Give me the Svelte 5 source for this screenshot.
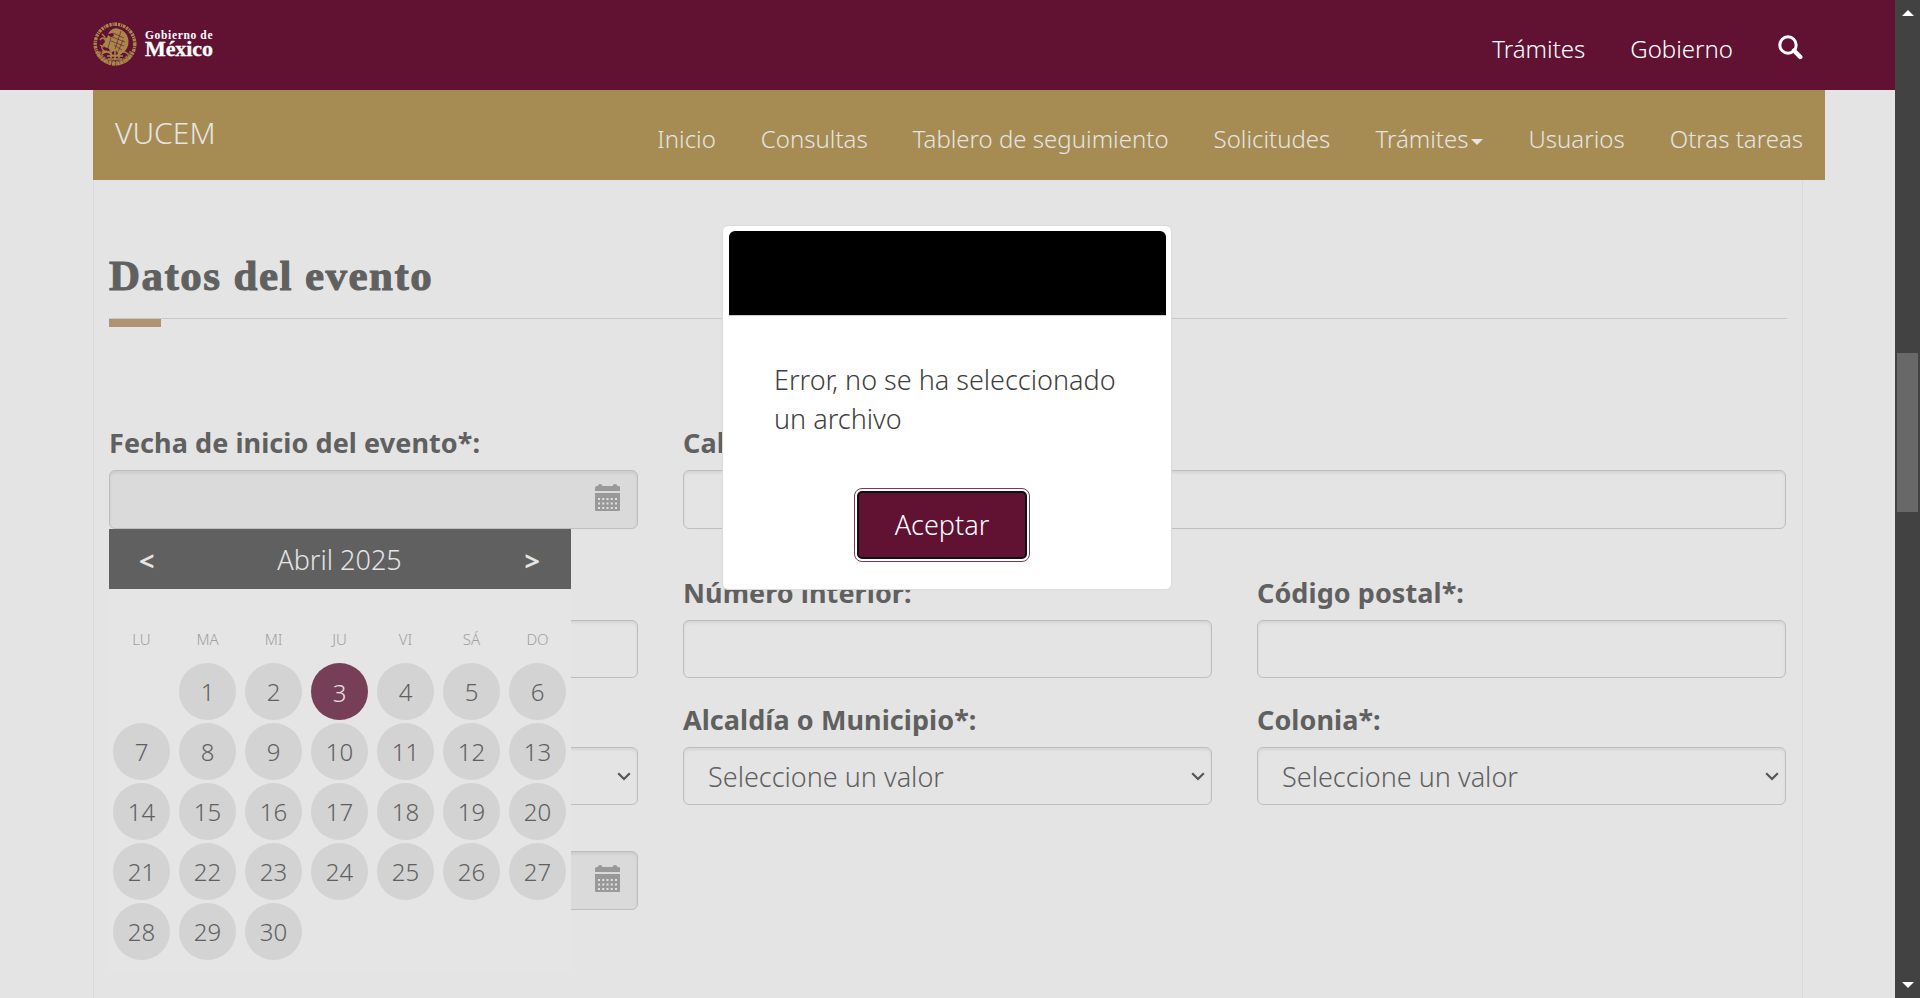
<script>
  const nav = ['Inicio', 'Consultas', 'Tablero de seguimiento', 'Solicitudes', 'Trámites', 'Usuarios', 'Otras tareas'];
  const weekdays = ['LU', 'MA', 'MI', 'JU', 'VI', 'SÁ', 'DO'];
  const days = [null, ...Array.from({ length: 30 }, (_, i) => i + 1)];
  const today = 3;
  const dots = [0, 1, 2].flatMap((r) => [0, 1, 2, 3, 4].map((c) => [3 + c * 4.25, 14 + r * 4.5]));
</script>

{#snippet calendarIcon()}
  <svg class="cal-icon" viewBox="0 0 25 28" width="25" height="28">
    <path fill="#999" d="M0 7V4q0-2 2-2h1q0-2 2-2t2.500 2h10q.5-2 2.500-2t2.500 2h.5q2.500 0 2.500 2v3zM0 9h25v17q0 1-1 1H1q-1 0-1-1z" />
    {#each dots as [x, y]}
      <rect {x} {y} width="2" height="2" fill="#e0e0e0" />
    {/each}
  </svg>
{/snippet}

{#snippet select(text)}
  <div class="field select">
    <span>{text}</span>
    <svg viewBox="0 0 14 9" width="14" height="9"><path d="M1.200 1.200 7 7l5.800-5.800" fill="none" stroke="#555" stroke-width="2.200" /></svg>
  </div>
{/snippet}

<div class="window">
  <div class="page">
    <header>
      <div class="brand">
        <svg viewBox="0 0 44 44" width="44" height="44" fill="none" stroke="#a9864a">
          <circle cx="22" cy="22" r="19.800" stroke-width="3.400" stroke-dasharray="2.300 .8 1.200 .7 2.800 .9" />
          <path stroke-width="5" stroke-dasharray="3 .7" d="M5 30q6 11 17 11t17-11" opacity=".75" />
          <path fill="#a9864a" stroke="none" d="M17 9q4-4 9-2 7 2 9 9 2 7-3 13l-5 4q-3-1-4-5l-4 2-4-4q-4 0-5-4l3-3-2-4 3 1 1-3 3 2 3-1-1-3-5 1z" />
          <path stroke="#611232" stroke-width=".8" d="m20 11 11 5m-12-1 13 5m-14-1 13 5m-10-1 8 5m-1-19-6 18m-3-15-4 14m15-8-6 14" opacity=".75" />
          <path stroke-width="1.300" d="M7 18q3-4 5 0t-1 5q-4 2-1 5t7 1m-8 3q5-4 9 0t9-1q4-3 8 1M14 34h16m-15 3h14M9 12l3 3m-5 8 4 2m-2 5 5-1" />
          <path stroke-width="1.600" d="M18 28v8m4-8v10m4-9v7" />
        </svg>
        <div class="wordmark"><span class="gob">Gobierno de</span><span class="mex">México</span></div>
      </div>
      <nav>
        <span>Trámites</span><span>Gobierno</span>
        <svg viewBox="0 0 26 25" width="26" height="25" fill="none" stroke="#fff">
          <circle cx="10" cy="10" r="8.200" stroke-width="3" /><path d="m16 15.500 6.300 6.500" stroke-width="4.400" stroke-linecap="round" />
        </svg>
      </nav>
    </header>

    <div class="subnav">
      <span class="title">VUCEM</span>
      <nav>
        {#each nav as item}
          <span>{item}{#if item === 'Trámites'}<i class="caret"></i>{/if}</span>
        {/each}
      </nav>
    </div>

    <main>
      <h2>Datos del evento</h2>
      <div class="rule"><i></i></div>

      <div class="grid first">
        <div class="cell has-calendar">
          <b class="label">Fecha de inicio del evento*:</b>
          <div class="field date">{@render calendarIcon()}</div>
          <div class="calendar">
            <div class="cal-head"><b>&lt;</b><span>Abril 2025</span><b>&gt;</b></div>
            <div class="cal-grid names">
              {#each weekdays as d}<span>{d}</span>{/each}
            </div>
            <div class="cal-grid">
              {#each days as d}
                <span class="slot">{#if d}<span class="day" class:today={d === today}>{d}</span>{/if}</span>
              {/each}
            </div>
          </div>
        </div>
        <div class="cell wide"><b class="label">Calle*:</b><div class="field tall"></div></div>
      </div>

      <div class="grid second">
        <div class="cell"><b class="label"></b><div class="field"></div></div>
        <div class="cell"><b class="label">Número interior:</b><div class="field"></div></div>
        <div class="cell"><b class="label">Código postal*:</b><div class="field"></div></div>
      </div>

      <div class="grid third">
        <div class="cell"><b class="label"></b>{@render select('')}</div>
        <div class="cell"><b class="label">Alcaldía o Municipio*:</b>{@render select('Seleccione un valor')}</div>
        <div class="cell"><b class="label">Colonia*:</b>{@render select('Seleccione un valor')}</div>
      </div>

      <div class="grid">
        <div class="cell"><div class="field date">{@render calendarIcon()}</div></div>
      </div>
    </main>
  </div>

  <div class="scrollbar">
    <i class="up"></i>
    <div class="thumb"></div>
    <i class="down"></i>
  </div>

  <div class="modal">
    <div class="modal-head"></div>
    <p>Error, no se ha seleccionado<br />un archivo</p>
    <button>Aceptar</button>
  </div>
</div>

<style>
  :global(body) { margin: 0; background: #e4e4e4; overflow: hidden; }
  * { box-sizing: border-box; }
  .window {
    position: relative; display: flex; width: 1920px; height: 998px; overflow: hidden;
    background: #e4e4e4; color: #606060; font: 300 27px/39px "Noto Sans", sans-serif;
  }
  svg { display: block; flex: none; }
  .page { width: 1895px; height: 998px; display: flex; flex-direction: column; }

  header { height: 90px; flex: none; background: #611232; display: flex; justify-content: space-between; padding: 0 91px 0 93px; }
  .brand { display: flex; padding-top: 22px; gap: 8px; }
  .wordmark { display: flex; flex-direction: column; color: #fff; padding-top: 7px; white-space: nowrap; }
  .gob { font: 700 11.500px/13px "Liberation Serif", serif; letter-spacing: .65px; }
  .mex { font: 700 22px/22px "Liberation Serif", serif; letter-spacing: -.1px; margin-top: -4px; -webkit-text-stroke: .3px #fff; }
  header nav { display: flex; gap: 45px; color: #fff; font-size: 24px; line-height: 36px; padding-top: 31px; }
  header nav svg { margin-top: 4px; }

  .subnav { width: 1732px; height: 90px; flex: none; margin-left: 93px; background: #a68c53; color: #e4e4e4; display: flex; justify-content: space-between; padding: 0 22px; }
  .subnav .title { font-size: 30px; line-height: 40px; padding-top: 23px; }
  .subnav nav { display: flex; gap: 45px; font-size: 24px; line-height: 36px; padding-top: 31px; white-space: nowrap; }
  .caret { display: inline-block; border: 6px solid transparent; border-top-color: #e4e4e4; border-bottom: 0; margin-left: 3px; vertical-align: 3px; }

  main { width: 1710px; flex: 1; min-height: 0; margin-left: 93px; padding: 0 15px; border: solid #dadada; border-width: 0 1px; }
  h2 { margin: 0; padding-top: 71px; font: 700 43px/50px "Liberation Serif", serif; letter-spacing: 1.450px; -webkit-text-stroke: 1px #606060; height: 138px; }
  .rule { border-top: 1px solid #c8c8c8; height: 105px; }
  .rule i { display: block; width: 52px; height: 8px; background: #b09472; }

  .grid { display: grid; grid-template-columns: repeat(3, 529px); column-gap: 45px; }
  .wide { grid-column: span 2; }
  .label { display: block; height: 47px; line-height: 39px; font-weight: 700; font-size: 27px; letter-spacing: .07px; white-space: nowrap; }
  .field { height: 58px; border: 1px solid #bebebe; border-radius: 6px; box-shadow: inset 0 2px 3px rgba(0, 0, 0, .07); display: flex; align-items: center; }
  .first { height: 150px; }
  .second { height: 127px; }
  .third { height: 151px; }
  .date { height: 59px; background: #dadada; justify-content: flex-end; padding-right: 17px; }
  .date svg { margin-top: -4px; }
  .tall { height: 59px; }
  .select { justify-content: space-between; padding: 0 6px 0 24px; }
  .select svg { margin-top: 0; }
  .has-calendar { position: relative; }

  .calendar { position: absolute; left: 0; top: 106px; width: 462px; height: 442px; background: #e5e5e5; z-index: 2; }
  .cal-head { height: 60px; background: #606060; color: #e4e4e4; display: flex; justify-content: space-between; align-items: center; padding: 0 31px 0 30px; font-size: 27px; }
  .cal-head b { font-weight: 700; padding-top: 3px; }
  .cal-grid { display: grid; grid-template-columns: repeat(7, 66px); grid-auto-rows: 60px; margin-left: -.5px; text-align: center; }
  .names { height: 74px; padding-top: 40px; grid-auto-rows: 20px; font-size: 15px; line-height: 20px; color: #a0a0a0; }
  .slot { display: flex; justify-content: center; }
  .day { width: 57px; height: 57px; border-radius: 50%; background: #d3d3d3; font-size: 24px; line-height: 57px; }
  .today { background: #773f57; color: #e4e4e4; line-height: 59px; }

  .scrollbar { width: 25px; height: 998px; background: #424242; display: flex; flex-direction: column; align-items: center; }
  .up, .down { border: 6px solid transparent; }
  .up { border-top: 0; border-bottom-color: #fff; margin-top: 10px; }
  .down { border-bottom: 0; border-top-color: #fff; margin-top: auto; margin-bottom: 10px; }
  .thumb { width: 21px; height: 159px; background: #686868; margin-top: 337px; }

  .modal {
    position: absolute; left: 722px; top: 225px; width: 450px; height: 365px; z-index: 5;
    background: #fff; border: 1px solid #dadada; border-radius: 6px; padding: 5px; color: #404040;
    display: flex; flex-direction: column; align-items: flex-start;
  }
  .modal-head { width: 437px; height: 85px; margin-left: 1px; background: #000; border-bottom: 1px solid #ccc; border-radius: 6px 6px 0 0; flex: none; }
  .modal p { margin: 44px 0 0 46px; white-space: nowrap; }
  .modal button {
    margin: 53px 0 0 129px; width: 170px; height: 68px; border: 2px solid #101010; border-radius: 5px; background: #611232;
    color: #fff; font: 300 27px/39px "Noto Sans", sans-serif; padding: 0 0 1px; outline: 1px solid #7d3853; outline-offset: 2px;
  }
</style>
